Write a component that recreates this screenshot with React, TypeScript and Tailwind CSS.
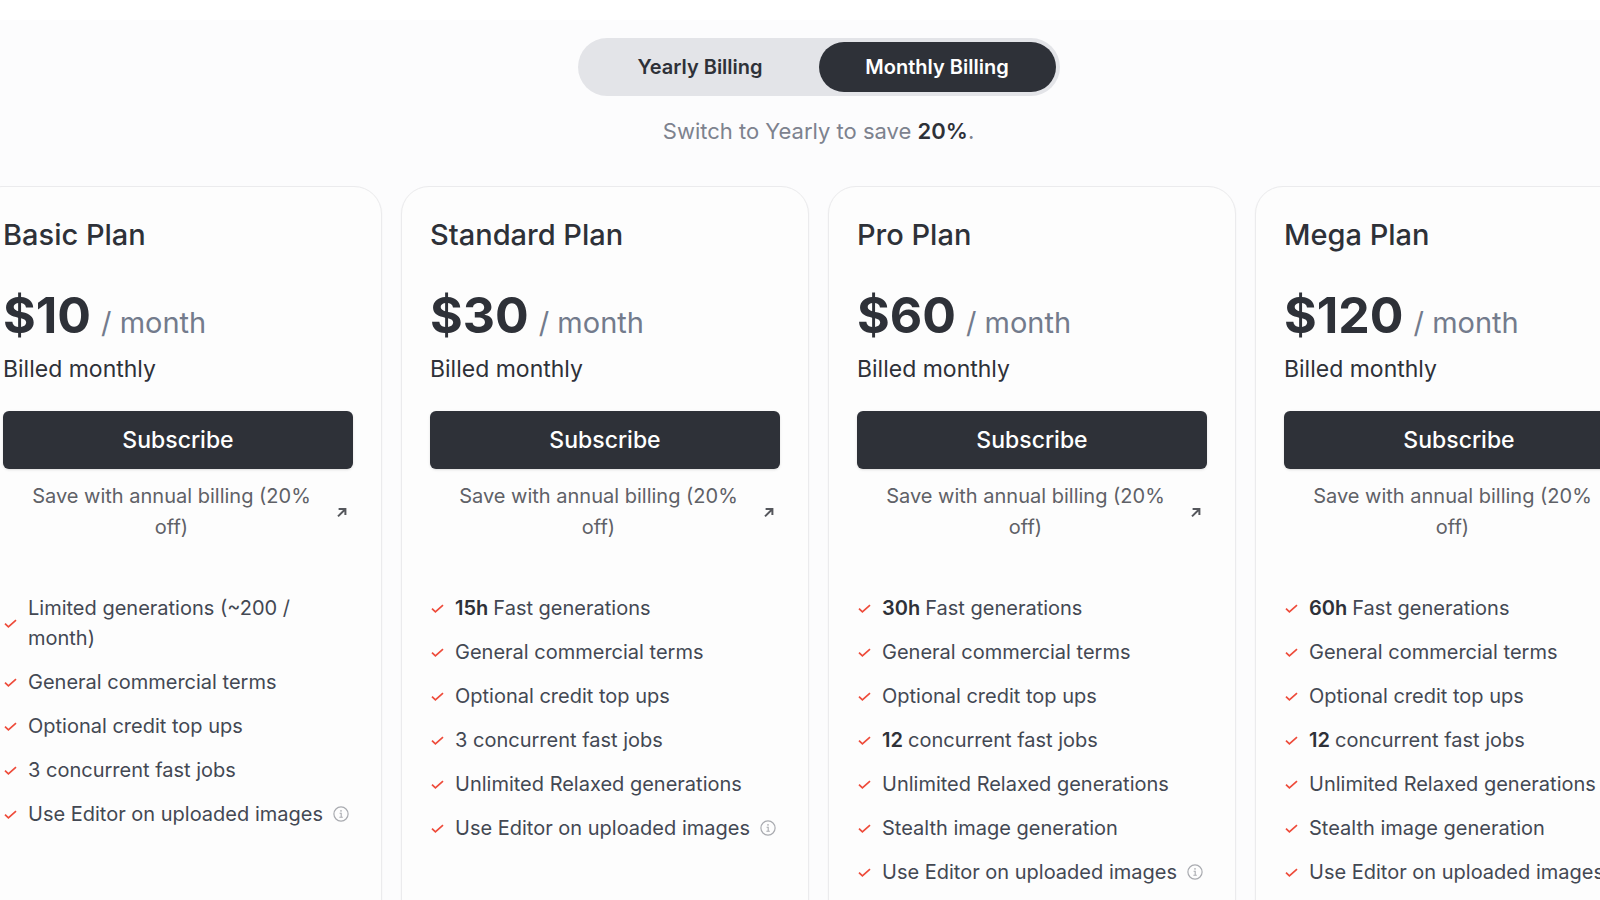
import React, { useState } from 'react';

type Feature = { bold?: string; text: string; info?: boolean };
type Plan = { name: string; price: number; features: Feature[] };

const terms: Feature = { text: 'General commercial terms' };
const topUps: Feature = { text: 'Optional credit top ups' };
const relaxed: Feature = { text: 'Unlimited Relaxed generations' };
const stealth: Feature = { text: 'Stealth image generation' };
const editor: Feature = { text: 'Use Editor on uploaded images', info: true };

const plans: Plan[] = [
  {
    name: 'Basic Plan',
    price: 10,
    features: [{ text: 'Limited generations (~200 / month)' }, terms, topUps, { text: '3 concurrent fast jobs' }, editor]
  },
  {
    name: 'Standard Plan',
    price: 30,
    features: [{ bold: '15h', text: 'Fast generations' }, terms, topUps, { text: '3 concurrent fast jobs' }, relaxed, editor]
  },
  {
    name: 'Pro Plan',
    price: 60,
    features: [{ bold: '30h', text: 'Fast generations' }, terms, topUps, { bold: '12', text: 'concurrent fast jobs' }, relaxed, stealth, editor]
  },
  {
    name: 'Mega Plan',
    price: 120,
    features: [{ bold: '60h', text: 'Fast generations' }, terms, topUps, { bold: '12', text: 'concurrent fast jobs' }, relaxed, stealth, editor]
  }
];

const CheckIcon = () => (
  <svg viewBox="0 0 15 15" className="w-[15px] h-[15px] shrink-0" fill="none" stroke="#ee4b3a" strokeWidth="1.7" aria-hidden="true">
    <path d="M2 7.6 L5.4 10.8 L13 4.2" />
  </svg>
);

const InfoIcon = () => (
  <svg viewBox="0 0 16 16" className="w-4 h-4" fill="none" stroke="#a9abb0" aria-hidden="true">
    <circle cx="8" cy="8" r="7.1" strokeWidth="1.2" />
    <path d="M6.6 7.2 H8.2 V11.2 M6.4 11.3 H9.8" strokeWidth="1.1" />
    <circle cx="8" cy="4.9" r="0.8" fill="#a9abb0" stroke="none" />
  </svg>
);

const ArrowIcon = () => (
  <svg viewBox="0 0 13 13" className="w-[13px] h-[13px] shrink-0" fill="none" stroke="#55575c" strokeWidth="2" aria-hidden="true">
    <path d="M3.6 3 H10.4 V9 M10.2 3.2 L3 10.4" />
  </svg>
);

const PlanCard: React.FC<{ plan: Plan }> = ({ plan }) => (
  <article className="px-7 pt-[31px] pb-12 bg-[#fdfdfd] border border-[#ebebed] rounded-[28px] shadow-xs">
    <h2 className="text-[29px] leading-[34px] font-medium">{plan.name}</h2>
    <p className="mt-[33px] flex items-baseline gap-[10px] leading-[60px]">
      <span className="text-[50px] font-bold">${plan.price}</span>
      <span className="text-[29px] text-[#737b8c]">/ month</span>
    </p>
    <p className="text-[23px] leading-[32px]">Billed monthly</p>
    <button type="button" className="mt-[26px] w-full h-[58px] rounded-md bg-[#2e3138] text-white text-[23px] font-medium shadow-sm cursor-pointer">
      Subscribe
    </button>
    <a href="#yearly" className="mt-3 px-[5px] flex items-center text-[20px] leading-[31px] text-[#5f6167]">
      <span className="flex-1 px-4 text-center">Save with annual billing (20% off)</span>
      <ArrowIcon />
    </a>
    <ul className="mt-[50px] flex flex-col gap-[14px] text-[20px] leading-[30px] text-[#434853]">
      {plan.features.map((feature) => (
        <li key={feature.text} className="flex items-center gap-[10px]">
          <CheckIcon />
          <span>
            {feature.bold && <strong className="font-semibold text-[#2e3138]">{feature.bold} </strong>}
            {feature.text}
          </span>
          {feature.info && (
            <button type="button" aria-label="More about the editor" className="shrink-0 cursor-pointer">
              <InfoIcon />
            </button>
          )}
        </li>
      ))}
    </ul>
  </article>
);

const App = () => {
  const [billing, setBilling] = useState('Monthly');

  return (
    <main className="h-screen overflow-hidden pt-5 bg-white text-[#2e3138] font-['Inter',sans-serif]">
      {/* The plan row bleeds past both sides of the window */}
      <section className="-ml-[26px] -mr-[63px] pt-[18px] bg-[#fcfcfd]">
        <div className="mx-auto w-[482px] h-[58px] p-1 grid grid-cols-2 rounded-full bg-[#e3e4e8]">
          {['Yearly', 'Monthly'].map((period) => (
            <button
              key={period}
              type="button"
              aria-pressed={billing === period}
              onClick={() => setBilling(period)}
              className={
                billing === period
                  ? 'rounded-full text-[20px] font-semibold cursor-pointer bg-[#2e3138] text-white'
                  : 'rounded-full text-[20px] font-semibold cursor-pointer'
              }
            >
              {period} Billing
            </button>
          ))}
        </div>
        <p className="mt-5 text-center text-[22px] leading-[30px] text-[#7d828e]">
          Switch to Yearly to save <strong className="font-semibold text-[#2e3138]">20%</strong>.
        </p>
        <div className="mt-10 grid grid-cols-4 gap-[19px]">
          {plans.map((plan) => (
            <PlanCard key={plan.name} plan={plan} />
          ))}
        </div>
      </section>
    </main>
  );
};

export default App;
